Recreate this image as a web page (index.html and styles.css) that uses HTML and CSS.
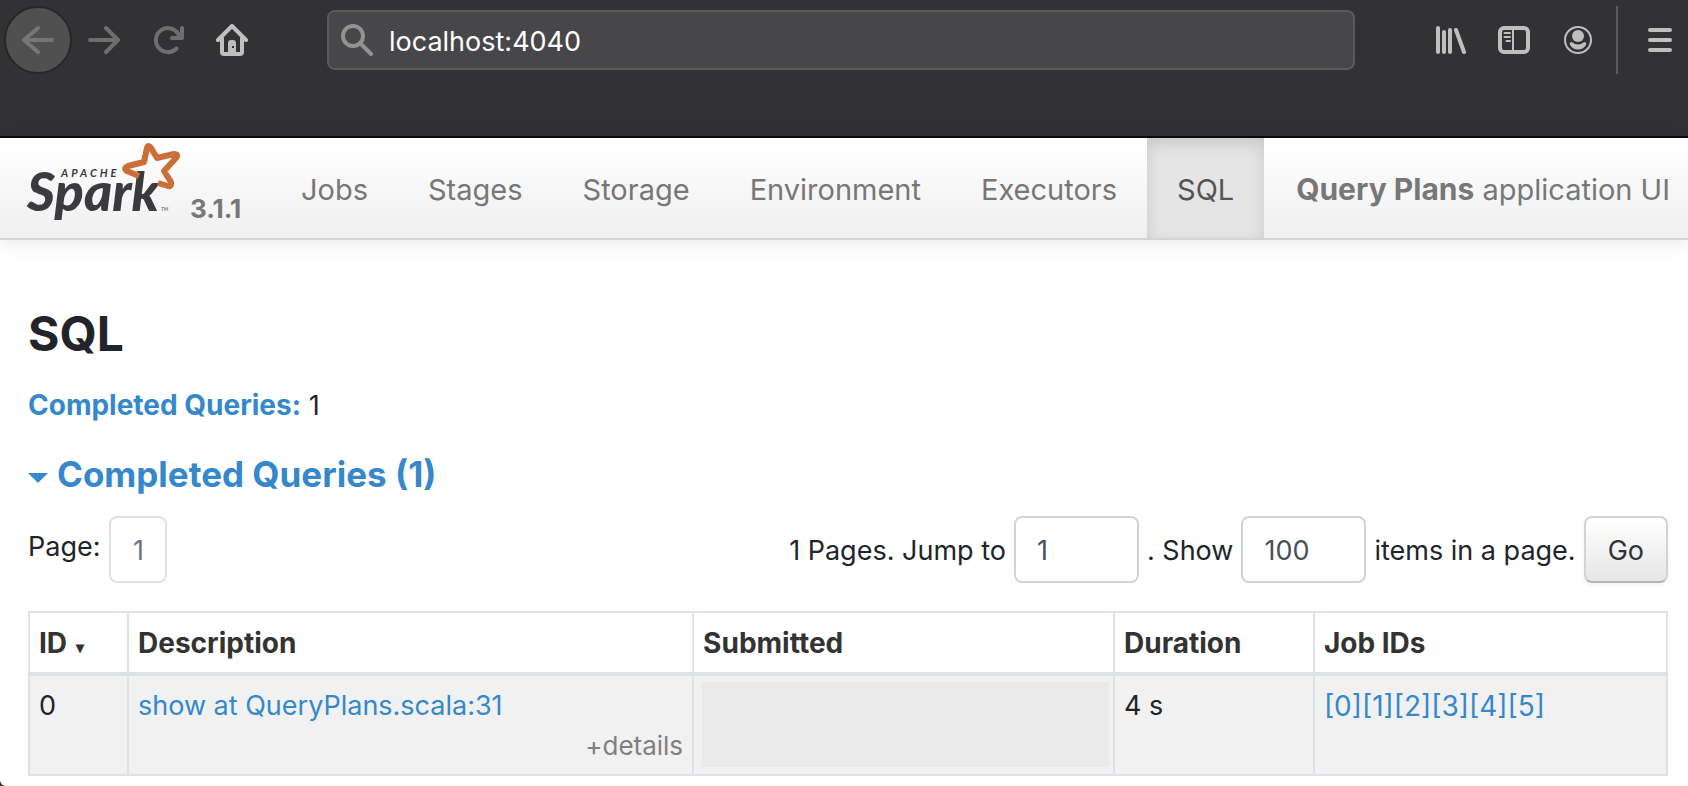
FILE: index.html
```html
<!DOCTYPE html>
<html lang="en">
<head>
<meta charset="utf-8">
<meta name="viewport" content="width=device-width, initial-scale=1">
<title>Query Plans - SQL</title>
<link rel="stylesheet" href="styles.css">
</head>
<body>
<div class="window">
  <header class="chrome">
    <div class="toolbar">
      <button class="tool back" type="button" aria-label="Back">
        <svg class="icon dim" viewBox="0 0 32 32"><path d="M2 16H30M16 4L2 16L16 28"/></svg>
      </button>
      <button class="tool" type="button" aria-label="Forward">
        <svg class="icon dim" viewBox="0 0 32 32"><path d="M2 16H30M18 4L30 16L18 28"/></svg>
      </button>
      <button class="tool" type="button" aria-label="Reload">
        <svg class="icon dim" viewBox="0 0 32 32"><path d="M24.500 24.500A12 12 0 1 1 26.500 10.500M20 14H30V4"/></svg>
      </button>
      <button class="tool" type="button" aria-label="Home">
        <svg class="icon" viewBox="0 0 32 32"><path d="M2 16L16 2L30 16M6 14V28Q6 30 8 30H24Q26 30 26 28V14"/><path class="solid" fill-rule="evenodd" d="M12 30V19Q12 16 15 16H17Q20 16 20 19V30ZM16 22V24H18V22Z"/></svg>
      </button>
      <label class="urlbar">
        <svg class="icon search" viewBox="0 0 32 32"><circle cx="12" cy="12" r="10"/><path d="M19 19L30 30"/></svg>
        <input class="url" type="text" value="localhost:4040" aria-label="Address">
      </label>
      <button class="tool" type="button" aria-label="Library">
        <svg class="icon" viewBox="0 0 32 32"><path d="M4 4V28M10 8V28M16 6V28M22 6L30 28"/></svg>
      </button>
      <button class="tool" type="button" aria-label="Sidebars">
        <svg class="icon" viewBox="0 0 32 32"><rect x="2" y="4" width="28" height="24" rx="4"/><path class="thin" d="M15 5V27M6.500 9H12M6.500 13H12M8.500 17H12"/></svg>
      </button>
      <button class="tool" type="button" aria-label="Account">
        <svg class="icon" viewBox="0 0 32 32"><circle class="thin" cx="16" cy="16" r="13"/><circle class="solid" cx="16" cy="12" r="6"/><path class="solid" d="M9 18Q7 19 8 21Q11 25.500 16 25.500T24 21Q25 19 23 18Q21 18 20 19.500Q16 21.500 12 19.500Q11 18 9 18Z"/></svg>
      </button>
      <span class="separator"></span>
      <button class="tool menu" type="button" aria-label="Menu">
        <svg class="icon" viewBox="0 0 32 32"><path d="M6 6H26M6 16H26M6 26H26"/></svg>
      </button>
    </div>
  </header>

  <nav class="navbar">
    <a class="brand" href="#">
      <svg class="logo" viewBox="0 0 156 96" role="img" aria-label="Apache Spark">
        <text class="logo-apache" x="35" y="37">APACHE</text>
        <text class="logo-spark" x="1" y="71">Spark</text>
        <text class="logo-tm" x="135" y="71">TM</text>
        <path class="logo-star" d="M113 36L101 31Q97 28 102 26L118 22L121 8Q122 4 125 8L131 18L148 14Q153 14 150 18L138 31L145 42Q146 47 142 46L132 43"/>
      </svg>
      <span class="version">3.1.1</span>
    </a>
    <ul class="tabs">
      <li><a class="tab" href="#">Jobs</a></li>
      <li><a class="tab" href="#">Stages</a></li>
      <li><a class="tab" href="#">Storage</a></li>
      <li><a class="tab" href="#">Environment</a></li>
      <li><a class="tab" href="#">Executors</a></li>
      <li><a class="tab active" href="#">SQL</a></li>
    </ul>
    <p class="app-name"><strong>Query Plans</strong> application UI</p>
  </nav>

  <main class="content">
    <h1 class="title">SQL</h1>
    <p class="summary"><a href="#completed"><strong>Completed Queries:</strong></a> 1</p>
    <h2 class="section" id="completed"><a href="#completed"><span class="caret"></span>Completed Queries (1)</a></h2>

    <div class="paging">
      <div class="pages"><span class="pages-label">Page:</span><a class="page-link" href="#">1</a></div>
      <form class="jump">
        <label for="page">1 Pages. Jump to</label>
        <input class="field" id="page" type="text" value="1">
        <label for="size">. Show</label>
        <input class="field" id="size" type="text" value="100">
        <span>items in a page.</span>
        <button class="go" type="button">Go</button>
      </form>
    </div>

    <table class="queries">
      <colgroup><col class="c-id"><col class="c-desc"><col class="c-sub"><col class="c-dur"><col class="c-jobs"></colgroup>
      <thead>
        <tr><th>ID <span class="sort">▾</span></th><th>Description</th><th>Submitted</th><th>Duration</th><th>Job IDs</th></tr>
      </thead>
      <tbody>
        <tr>
          <td>0</td>
          <td><a href="#">show at QueryPlans.scala:31</a><span class="details">+details</span></td>
          <td class="masked"><div class="mask"></div></td>
          <td>4 s</td>
          <td class="jobs"><a href="#">[0]</a><a href="#">[1]</a><a href="#">[2]</a><a href="#">[3]</a><a href="#">[4]</a><a href="#">[5]</a></td>
        </tr>
      </tbody>
    </table>
  </main>
</div>
</body>
</html>
```

FILE: styles.css
```css
* { box-sizing: border-box; }

html { background: #323234; }

body {
  margin: 0;
  font-family: Inter, "Liberation Sans", sans-serif;
  font-size: 27px;
  line-height: 40px;
  color: #212529;
}

a { color: #3588cc; text-decoration: none; }

button, input { font: inherit; }

.window {
  min-height: 100vh;
  background: #fff;
  border-bottom-left-radius: 6px;
}

/* Browser toolbar */
.chrome {
  height: 138px;
  background: #323234;
  border-bottom: 2px solid #0c0c0d;
}

.toolbar {
  display: flex;
  align-items: center;
  height: 80px;
  padding-left: 4px;
}

.tool {
  display: flex;
  flex: none;
  align-items: center;
  justify-content: center;
  width: 64px;
  height: 68px;
  padding: 0;
  border: 0;
  background: none;
}

.back {
  width: 68px;
  border: 2px solid #272728;
  border-radius: 50%;
  background: #505050;
}

.icon {
  display: block;
  width: 32px;
  height: 32px;
  fill: none;
  stroke: #bfbfc0;
  stroke-width: 4;
  stroke-linecap: round;
  stroke-linejoin: round;
}

.icon .thin { stroke-width: 2; }
.icon .solid { fill: #bfbfc0; stroke: none; }
.dim { stroke: #6e6e6f; }
.back .dim { stroke: #767676; }

.urlbar {
  display: flex;
  flex: 1;
  align-items: center;
  gap: 16px;
  height: 60px;
  margin: 0 63px;
  padding: 0 12px;
  border: 2px solid #5a5a5b;
  border-radius: 8px;
  background: #474749;
}

.search { flex: none; stroke: #929293; }

.url {
  flex: 1;
  min-width: 0;
  padding: 3px 0 0;
  border: 0;
  outline: 0;
  background: none;
  color: #fff;
}

.separator {
  flex: none;
  width: 2px;
  height: 68px;
  margin: 0 14px 0 6px;
  background: #5b5b5c;
}

.menu { width: 56px; }

/* Spark navigation */
.navbar {
  display: flex;
  height: 102px;
  border-bottom: 2px solid #d4d4d4;
  background: linear-gradient(#fff, #f0f0f0);
  box-shadow: 0 2px 20px rgba(0, 0, 0, 0.1);
}

.brand {
  display: flex;
  flex: none;
  gap: 8px;
  width: 271px;
  padding-left: 26px;
  color: #777;
}

.logo { width: 156px; height: 96px; margin-top: 2px; overflow: visible; }

.logo text {
  font-family: Lato, sans-serif;
  font-style: italic;
  font-weight: 900;
  fill: #3c3a3e;
}

.logo .logo-spark { font-size: 54px; }
.logo .logo-apache { font-size: 11px; font-weight: 700; letter-spacing: 3px; }
.logo .logo-tm { font-size: 5px; fill: #888; }

.logo-star {
  fill: none;
  stroke: #cc6e38;
  stroke-width: 6;
  stroke-linejoin: round;
}

.version { padding-top: 51px; font-size: 26px; font-weight: 700; }

.tabs { display: flex; margin: 0; padding: 0; list-style: none; }

.tab {
  display: block;
  height: 100px;
  padding: 0 30px;
  font-size: 29px;
  line-height: 104px;
  color: #777;
}

.active {
  background: #e5e5e5;
  box-shadow: inset 0 6px 16px rgba(0, 0, 0, 0.125);
  color: #555;
}

.app-name {
  margin: 0 18px 0 auto;
  font-size: 29px;
  line-height: 103px;
  white-space: nowrap;
  color: #777;
}

.app-name strong { font-size: 30px; }

/* Page */
.content { padding: 64px 20px 8px 28px; }

.title { margin: 0; font-size: 48px; line-height: 60px; }

.summary { margin: 21px 0 0; }
.summary strong { font-size: 28px; }

.section { margin: 22px 0 0; font-size: 35px; line-height: 52px; }

.caret {
  display: inline-block;
  margin-right: 9px;
  border: 10px solid transparent;
  border-top-color: currentColor;
  border-bottom: 0;
  vertical-align: 4px;
}

.paging { display: flex; justify-content: space-between; margin-top: 16px; }
.pages { display: flex; gap: 9px; }
.pages-label { padding-top: 11px; }

.page-link {
  min-width: 58px;
  height: 67px;
  border: 2px solid #dee2e6;
  border-radius: 8px;
  line-height: 66px;
  text-align: center;
  color: #6c757d;
}

.jump { display: flex; align-items: center; gap: 8px; }
.jump label, .jump span { padding-top: 2px; }

.field {
  width: 125px;
  height: 67px;
  padding: 2px 21px 0;
  border: 2px solid #ced4da;
  border-radius: 8px;
  background: #fff;
  color: #495057;
}

.go {
  height: 67px;
  padding: 2px 22px 0;
  border: 2px solid #ced4da;
  border-bottom-color: #b3b3b3;
  border-radius: 8px;
  background: linear-gradient(#fff, #e6e6e6);
  box-shadow: 0 2px 4px rgba(0, 0, 0, 0.05);
  color: #333;
}

.queries {
  width: 100%;
  margin-top: 28px;
  border-collapse: collapse;
  table-layout: fixed;
}

.c-id { width: 99px; }
.c-desc { width: 34.5%; }
.c-sub { width: 25.7%; }
.c-dur { width: 12.2%; }

.queries th, .queries td {
  padding: 10px 9px 8px;
  border: 2px solid #dee2e6;
  text-align: left;
  vertical-align: top;
}

.queries th {
  padding-bottom: 5px;
  border-bottom-width: 4px;
  font-size: 28px;
  color: #333;
}

.queries td { background: #f1f1f1; }
.queries .jobs { font-size: 28px; }
.sort { margin-left: 2px; font-size: 16px; }

.details {
  display: block;
  font-size: 26px;
  text-align: right;
  color: #808080;
}

.queries .masked { padding: 6px 4px 6px 8px; }
.mask { height: 85px; background: #eaeaea; }
```
